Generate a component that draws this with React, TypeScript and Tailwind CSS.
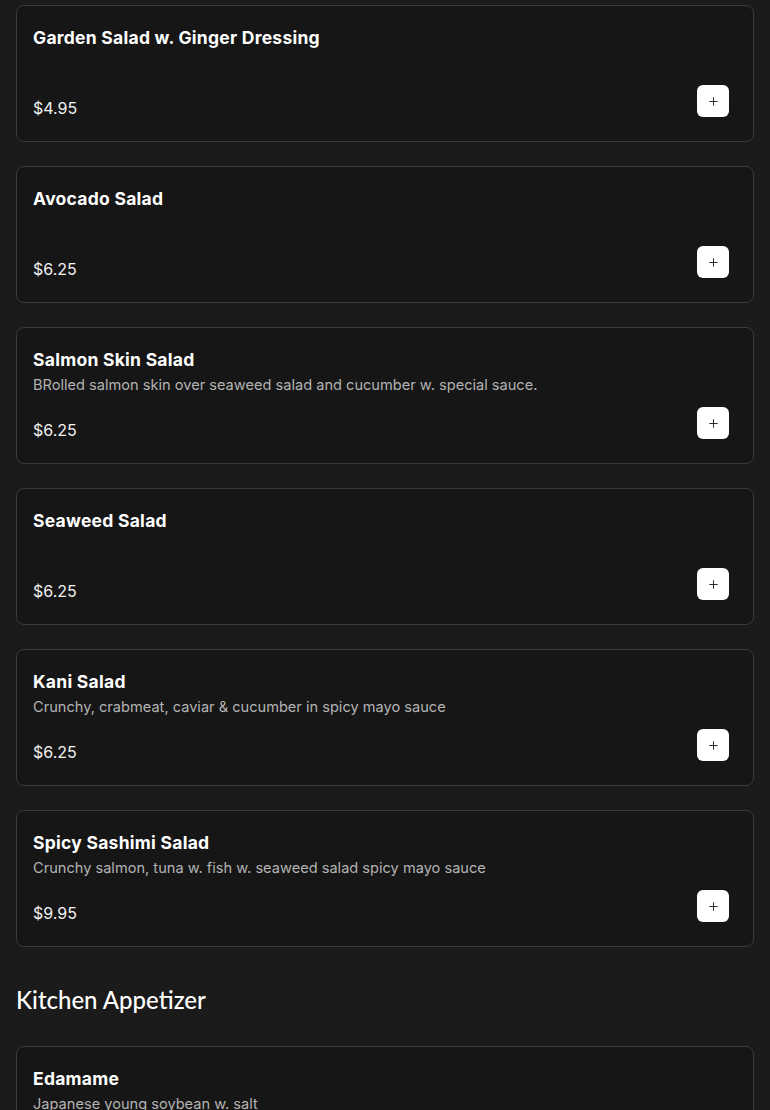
import { Plus } from 'lucide-react';

interface MenuItem {
  name: string;
  description?: string;
  price: string;
}

const salads: MenuItem[] = [
  { name: 'Garden Salad w. Ginger Dressing', price: '$4.95' },
  { name: 'Avocado Salad', price: '$6.25' },
  {
    name: 'Salmon Skin Salad',
    description: 'BRolled salmon skin over seaweed salad and cucumber w. special sauce.',
    price: '$6.25',
  },
  { name: 'Seaweed Salad', price: '$6.25' },
  { name: 'Kani Salad', description: 'Crunchy, crabmeat, caviar & cucumber in spicy mayo sauce', price: '$6.25' },
  {
    name: 'Spicy Sashimi Salad',
    description: 'Crunchy salmon, tuna w. fish w. seaweed salad spicy mayo sauce',
    price: '$9.95',
  },
];

const appetizers: MenuItem[] = [
  { name: 'Edamame', description: 'Japanese young soybean w. salt', price: '$4.95' },
  { name: 'Gyoza', description: 'Pan fried pork dumplings', price: '$5.95' },
];

function MenuCard({ item }: { item: MenuItem }) {
  return (
    <div className="flex flex-col rounded-lg border border-[#3b3b3b] bg-[#161616] px-4 pt-[18px] pb-[19px]">
      <h3 className="h-7 text-[17.5px] leading-7 font-bold tracking-[0.015em] text-white">{item.name}</h3>
      <p className="h-[22px] text-[14.6px] leading-[22px] text-[#b3b3b3]">{item.description}</p>
      <div className="mt-[11px] flex items-end justify-between">
        <span className="mb-[2px] text-[16px] leading-6 text-[#f2f2f2]">{item.price}</span>
        <button className="mr-2 mb-[5px] flex h-8 w-8 items-center justify-center rounded-md bg-white text-[#222]">
          <Plus className="h-[13px] w-[13px]" strokeWidth={1.75} />
        </button>
      </div>
    </div>
  );
}

export default function App() {
  return (
    <div
      className="h-[1110px] overflow-hidden bg-[#1b1b1b] px-4 pt-[5px]"
      style={{ fontFamily: 'Inter, "Noto Sans", sans-serif' }}
    >
      <div className="flex flex-col gap-6">
        {salads.map((item) => (
          <MenuCard key={item.name} item={item} />
        ))}
      </div>

      <h2
        className="mt-[37px] mb-[30px] text-[24px] leading-8 font-medium text-white"
        style={{ fontFamily: 'Lato, "Noto Sans", sans-serif' }}
      >
        Kitchen Appetizer
      </h2>

      <div className="flex flex-col gap-6">
        {appetizers.map((item) => (
          <MenuCard key={item.name} item={item} />
        ))}
      </div>
    </div>
  );
}
